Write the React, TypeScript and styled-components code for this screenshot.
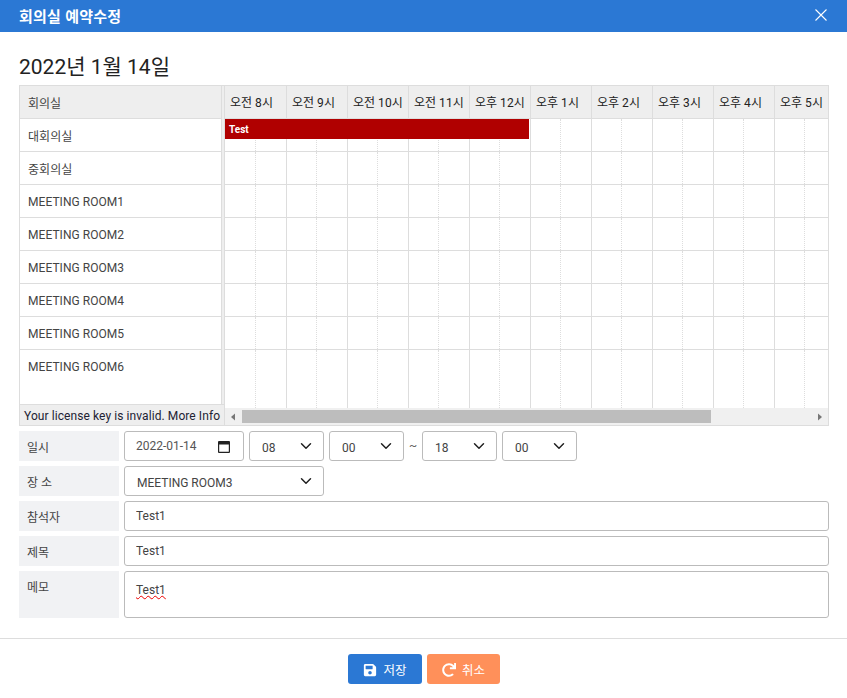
import React from "react";
import styled, { createGlobalStyle } from "styled-components";
import { FaSave, FaRedo } from "react-icons/fa";

const Global = createGlobalStyle`
  html, body { margin: 0; padding: 0; background: #fff; }
  body { font-family: Roboto, "Noto Sans CJK KR", sans-serif; font-size: 12px; color: #444; }
  * { box-sizing: border-box; }
`;

const Modal = styled.div`
  width: 847px;
  height: 698px;
  display: flex;
  flex-direction: column;
  overflow: hidden;
`;
const TitleBar = styled.header`
  height: 32px;
  flex: none;
  background: #2b78d4;
  color: #fff;
  display: flex;
  align-items: center;
  justify-content: space-between;
  padding: 0 19px;
`;
const TitleText = styled.h1`
  margin: 0 0 1px;
  font-size: 15px;
  font-weight: 700;
  letter-spacing: 0.25px;
`;
const CloseIcon = styled.svg`
  width: 12px;
  height: 12px;
  margin: 0 1px 3px 0;
  stroke: #fff;
  stroke-width: 1.1;
  fill: none;
`;
const Body = styled.main`
  padding: 20px 18px 0 19px;
  flex: 1;
`;
const DateHeading = styled.h2`
  margin: 0;
  height: 33px;
  line-height: 30px;
  font-size: 21px;
  font-weight: 400;
  color: #222;
`;
const Scheduler = styled.section`
  position: relative;
  width: 810px;
  height: 341px;
  border: 1px solid #ddd;
  display: grid;
  grid-template-columns: 202px 2px 1fr;
  overflow: hidden;
  background: #fff;
`;
const RoomPane = styled.div`
  display: flex;
  flex-direction: column;
  border-right: 1px solid #ddd;
  width: 202px;
`;
const Splitter = styled.div`
  background: #eee;
`;
const RoomHead = styled.div`
  height: 33px;
  flex: none;
  background: #eee;
  border-bottom: 1px solid #ddd;
  line-height: 36px;
  padding-left: 8px;
  color: #444;
`;
const RoomRow = styled.div<{ $last?: boolean; $korean?: boolean }>`
  height: 33px;
  flex: none;
  border-bottom: ${(p) => (p.$last ? "0" : "1px solid #ddd")};
  line-height: ${(p) => (p.$korean ? "36px" : "34px")};
  padding-left: 8px;
  letter-spacing: 0.05px;
  color: #444;
`;
const RoomRest = styled.div`
  flex: 1;
`;
const License = styled.div`
  height: 21px;
  width: 204px;
  position: relative;
  flex: none;
  background: #eee;
  border-top: 1px solid #ddd;
  padding-left: 4px;
  line-height: 22px;
  letter-spacing: 0.08px;
  color: #223;
  white-space: nowrap;
`;
const TimePane = styled.div`
  position: relative;
  border-left: 1px solid #ddd;
  display: flex;
  flex-direction: column;
  overflow: hidden;
  min-width: 0;
`;
const HeadRow = styled.div`
  display: flex;
  height: 33px;
  flex: none;
  background: #eee;
  border-bottom: 1px solid #ddd;
`;
const HourHead = styled.div`
  width: 61px;
  flex: none;
  border-right: 1px solid #ddd;
  padding-left: 5px;
  line-height: 35px;
  letter-spacing: 0.02px;
  color: #222;
  white-space: nowrap;
  &:first-child { width: 62px; }
`;
const GridRow = styled.div<{ $fill?: boolean }>`
  display: flex;
  flex: ${(p) => (p.$fill ? "1" : "none")};
  height: ${(p) => (p.$fill ? "auto" : "33px")};
  border-bottom: ${(p) => (p.$fill ? "0" : "1px solid #ddd")};
`;
const Cell = styled.div`
  width: 61px;
  flex: none;
  border-right: 1px solid #ddd;
  display: grid;
  grid-template-columns: 30px 1fr;
  &:first-child {
    width: 62px;
    grid-template-columns: 31px 1fr;
  }
`;
const HalfCell = styled.div`
  border-right: 1px dotted #ddd;
`;
const Event = styled.div`
  position: absolute;
  left: 0;
  top: 33px;
  width: 304px;
  height: 20px;
  background: #b00000;
  color: #fff;
  font-size: 10px;
  font-weight: 700;
  padding-left: 4px;
  line-height: 21px;
`;
const ScrollBar = styled.div`
  height: 17px;
  flex: none;
  background: #f0f0f0;
  display: flex;
  align-items: center;
`;
const ScrollArrow = styled.svg`
  width: 17px;
  height: 8px;
  flex: none;
  fill: #777;
`;
const Thumb = styled.div`
  width: 469px;
  height: 13px;
  flex: none;
  background: #bdbdbd;
`;
const Spacer = styled.div`
  flex: 1;
`;
const Form = styled.form`
  margin-top: 5px;
  width: 810px;
  display: flex;
  flex-direction: column;
  gap: 5px;
`;
const FormRow = styled.div`
  display: flex;
  gap: 5px;
`;
const Label = styled.label<{ $tall?: boolean }>`
  width: 100px;
  flex: none;
  background: #f1f2f4;
  color: #444;
  padding: ${(p) => (p.$tall ? "7px" : "0")} 0 0 8px;
  display: flex;
  align-items: ${(p) => (p.$tall ? "flex-start" : "center")};
`;
const Fields = styled.div`
  display: flex;
  align-items: center;
  gap: 5px;
  flex: 1;
`;
const fieldBase = `
  height: 30px;
  border: 1px solid #bbb;
  border-radius: 3px;
  background-color: #fff;
  font-family: Roboto, "Noto Sans CJK KR", sans-serif;
  font-size: 12px;
  color: #444;
  outline: none;
`;
const TextInput = styled.input`
  ${fieldBase}
  flex: 1;
  padding: 0 11px;
`;
const DateField = styled.div`
  position: relative;
  width: 120px;
  height: 30px;
  flex: none;
`;
const DateInput = styled.input`
  ${fieldBase}
  width: 100%;
  padding: 0 11px;
  color: #555;
`;
const CalendarIcon = styled.svg`
  position: absolute;
  right: 14px;
  top: 10px;
  width: 12px;
  height: 12px;
  fill: #222;
`;
const Select = styled.select<{ $w: number }>`
  ${fieldBase}
  width: ${(p) => p.$w}px;
  flex: none;
  appearance: none;
  padding: 3px 12px 0;
  background-image: url("data:image/svg+xml,%3csvg xmlns='http://www.w3.org/2000/svg' viewBox='0 0 16 16'%3e%3cpath fill='none' stroke='%23222' stroke-linecap='round' stroke-linejoin='round' stroke-width='2' d='M2 5l6 6 6-6'/%3e%3c/svg%3e");
  background-repeat: no-repeat;
  background-position: right 10px center;
  background-size: 14px 12px;
`;
const Tilde = styled.span`
  width: 8px;
  text-align: center;
  color: #666;
`;
const MemoBox = styled.div`
  ${fieldBase}
  flex: 1;
  height: 47px;
  padding: 11px 11px 0;
  line-height: 14px;
`;
const Misspelt = styled.span`
  text-decoration: underline wavy #e00;
  text-decoration-thickness: 1px;
  text-underline-offset: 1px;
`;
const Footer = styled.footer`
  height: 60px;
  flex: none;
  border-top: 1px solid #ddd;
  display: flex;
  justify-content: center;
  gap: 5px;
  padding-top: 15px;
  margin-top: 20px;
`;
const Button = styled.button<{ $bg: string; $w: number }>`
  height: 30px;
  width: ${(p) => p.$w}px;
  border: 0;
  border-radius: 3px;
  background: ${(p) => p.$bg};
  color: #fff;
  font-family: Roboto, "Noto Sans CJK KR", sans-serif;
  font-size: 12.5px;
  display: inline-flex;
  align-items: center;
  justify-content: center;
  gap: 6px;
  padding: 0 0 0 1px;
  svg { width: 14px; height: 14px; margin-top: 2px; }
`;

const rooms = ["대회의실", "중회의실", "MEETING ROOM1", "MEETING ROOM2", "MEETING ROOM3", "MEETING ROOM4", "MEETING ROOM5"];
const hours = ["오전 8시", "오전 9시", "오전 10시", "오전 11시", "오후 12시", "오후 1시", "오후 2시", "오후 3시", "오후 4시", "오후 5시"];

const Cells = () => (
  <>
    {hours.map((h) => (
      <Cell key={h}>
        <HalfCell />
      </Cell>
    ))}
  </>
);

export default function App() {
  return (
    <Modal>
      <Global />
      <TitleBar>
        <TitleText>회의실 예약수정</TitleText>
        <CloseIcon viewBox="0 0 12 12">
          <path d="M.5.5l11 11M11.5.5l-11 11" />
        </CloseIcon>
      </TitleBar>
      <Body>
        <DateHeading>2022년 1월 14일</DateHeading>
        <Scheduler>
          <RoomPane>
            <RoomHead>회의실</RoomHead>
            {rooms.map((r) => (
              <RoomRow key={r} $korean={!r.startsWith("MEETING")}>{r}</RoomRow>
            ))}
            <RoomRow $last>MEETING ROOM6</RoomRow>
            <RoomRest />
            <License>Your license key is invalid. More Info</License>
          </RoomPane>
          <Splitter />
          <TimePane>
            <HeadRow>
              {hours.map((h) => (
                <HourHead key={h}>{h}</HourHead>
              ))}
            </HeadRow>
            {rooms.map((r) => (
              <GridRow key={r}>
                <Cells />
              </GridRow>
            ))}
            <GridRow $fill>
              <Cells />
            </GridRow>
            <Event>Test</Event>
            <ScrollBar>
              <ScrollArrow viewBox="0 0 17 8">
                <path d="M6 4l4-3.5v7z" />
              </ScrollArrow>
              <Thumb />
              <Spacer />
              <ScrollArrow viewBox="0 0 17 8">
                <path d="M11 4L7 .5v7z" />
              </ScrollArrow>
            </ScrollBar>
          </TimePane>
        </Scheduler>
        <Form>
          <FormRow>
            <Label>일시</Label>
            <Fields>
              <DateField>
                <DateInput defaultValue="2022-01-14" />
                <CalendarIcon viewBox="0 0 12 12">
                  <path d="M1 0h10a1 1 0 0 1 1 1v10a1 1 0 0 1-1 1H1a1 1 0 0 1-1-1V1a1 1 0 0 1 1-1zm.2 3.4v7.4h9.6V3.4z" />
                </CalendarIcon>
              </DateField>
              <Select $w={75} defaultValue="08"><option>08</option></Select>
              <Select $w={75} defaultValue="00"><option>00</option></Select>
              <Tilde>~</Tilde>
              <Select $w={75} defaultValue="18"><option>18</option></Select>
              <Select $w={75} defaultValue="00"><option>00</option></Select>
            </Fields>
          </FormRow>
          <FormRow>
            <Label>장 소</Label>
            <Fields>
              <Select $w={200} defaultValue="MEETING ROOM3"><option>MEETING ROOM3</option></Select>
            </Fields>
          </FormRow>
          <FormRow>
            <Label>참석자</Label>
            <Fields><TextInput defaultValue="Test1" /></Fields>
          </FormRow>
          <FormRow>
            <Label>제목</Label>
            <Fields><TextInput defaultValue="Test1" /></Fields>
          </FormRow>
          <FormRow>
            <Label $tall>메모</Label>
            <Fields>
              <MemoBox><Misspelt>Test1</Misspelt></MemoBox>
            </Fields>
          </FormRow>
        </Form>
      </Body>
      <Footer>
        <Button $bg="#2b78d4" $w={74} type="button"><FaSave />저장</Button>
        <Button $bg="#ff905a" $w={73} type="button"><FaRedo />취소</Button>
      </Footer>
    </Modal>
  );
}
